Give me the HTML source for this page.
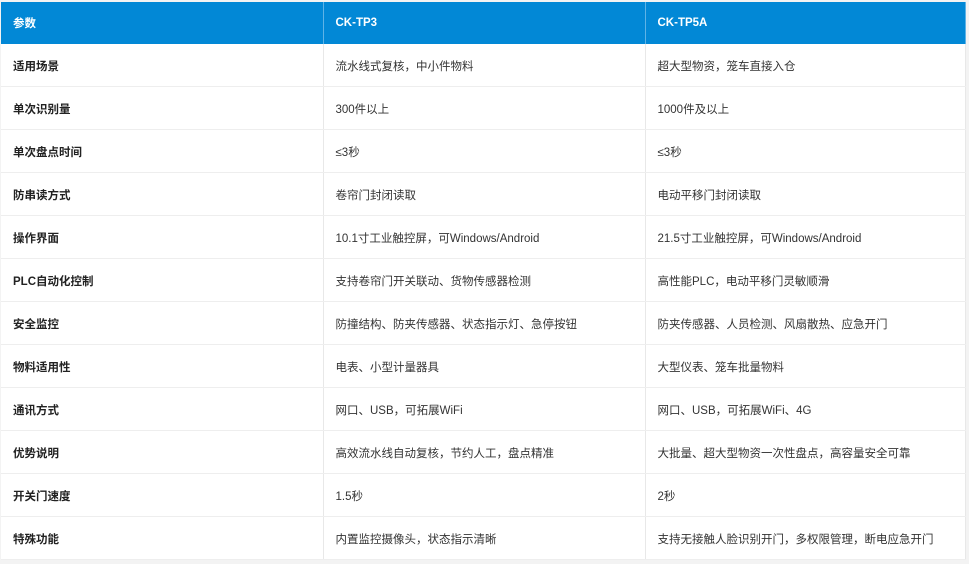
<!DOCTYPE html>
<html><head><meta charset="utf-8"><style>
body{margin:0;background:#f3f3f3;width:969px;height:564px;overflow:hidden;font-family:"Liberation Sans","Noto Sans CJK SC",sans-serif;}
table{position:absolute;left:1px;top:2px;width:965px;border-collapse:collapse;background:#fff;table-layout:fixed;}
td,th{height:42px;padding:0 0 0 12px;font-size:11.5px;color:#333;text-align:left;border-right:1px solid #e8e8e8;border-bottom:1px solid #eee;}
td{padding-top:2px;height:40px}
th{background:#0288d6;color:#fff;font-weight:bold;border-right:1px solid #5fb3e6;border-bottom:none}
td:first-child{font-weight:bold;color:#222}
</style></head><body>
<table>
<colgroup><col style="width:322px"><col style="width:322px"><col></colgroup>
<tr><th>参数</th><th>CK-TP3</th><th>CK-TP5A</th></tr>
<tr><td>适用场景</td><td>流水线式复核，中小件物料</td><td>超大型物资，笼车直接入仓</td></tr>
<tr><td>单次识别量</td><td>300件以上</td><td>1000件及以上</td></tr>
<tr><td>单次盘点时间</td><td>≤3秒</td><td>≤3秒</td></tr>
<tr><td>防串读方式</td><td>卷帘门封闭读取</td><td>电动平移门封闭读取</td></tr>
<tr><td>操作界面</td><td>10.1寸工业触控屏，可Windows/Android</td><td>21.5寸工业触控屏，可Windows/Android</td></tr>
<tr><td>PLC自动化控制</td><td>支持卷帘门开关联动、货物传感器检测</td><td>高性能PLC，电动平移门灵敏顺滑</td></tr>
<tr><td>安全监控</td><td>防撞结构、防夹传感器、状态指示灯、急停按钮</td><td>防夹传感器、人员检测、风扇散热、应急开门</td></tr>
<tr><td>物料适用性</td><td>电表、小型计量器具</td><td>大型仪表、笼车批量物料</td></tr>
<tr><td>通讯方式</td><td>网口、USB，可拓展WiFi</td><td>网口、USB，可拓展WiFi、4G</td></tr>
<tr><td>优势说明</td><td>高效流水线自动复核，节约人工，盘点精准</td><td>大批量、超大型物资一次性盘点，高容量安全可靠</td></tr>
<tr><td>开关门速度</td><td>1.5秒</td><td>2秒</td></tr>
<tr><td>特殊功能</td><td>内置监控摄像头，状态指示清晰</td><td>支持无接触人脸识别开门，多权限管理，断电应急开门</td></tr>
</table>
</body></html>
